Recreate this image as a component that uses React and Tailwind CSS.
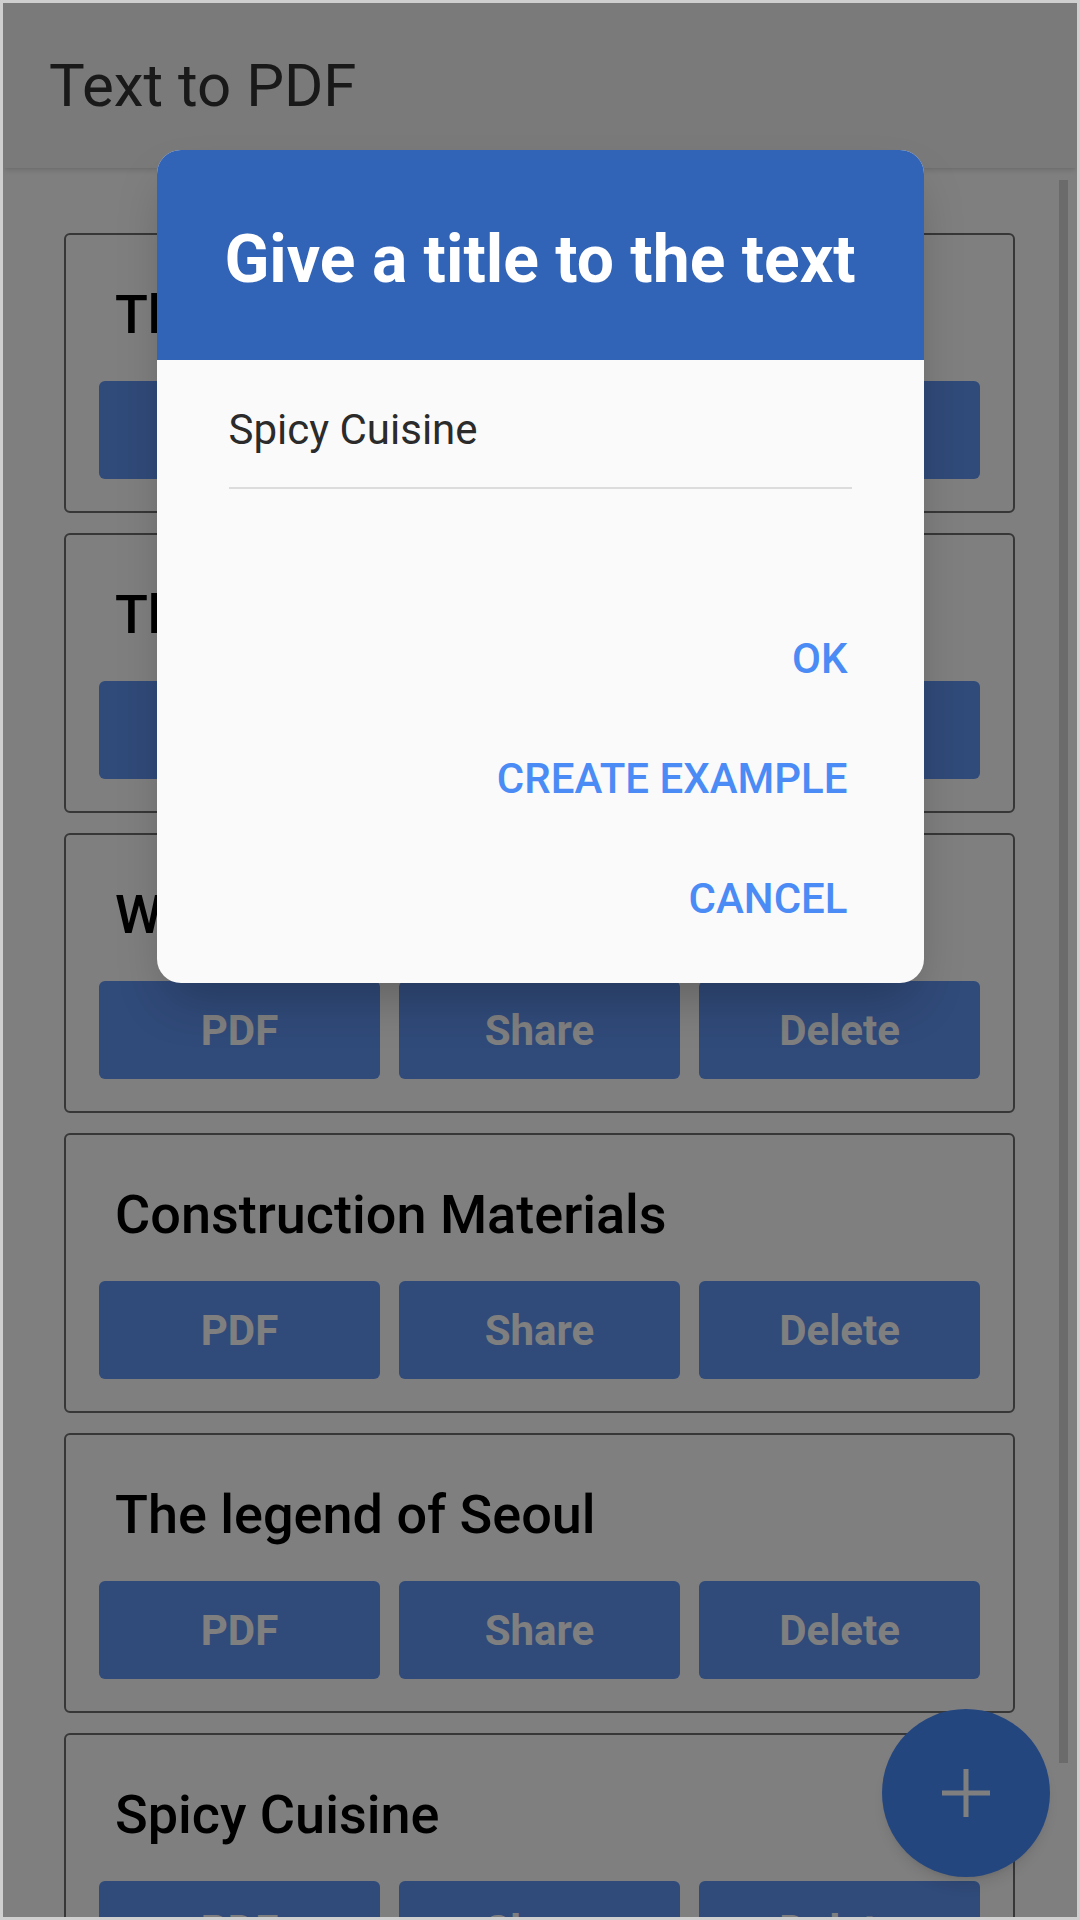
import React from 'react';

const notes = [
  'The little prince',
  'The history of tea',
  'Weekend shopping list',
  'Construction Materials',
  'The legend of Seoul',
  'Spicy Cuisine',
];

const NoteCard = ({ title }) => (
  <div className="rounded-[6px] border-2 border-[#6e6e6e] pt-[48px] px-[33px] pb-[32px]">
    <h2 className="text-[54px] leading-[64px] font-medium text-black pl-[16px] whitespace-nowrap">{title}</h2>
    <div className="mt-[34px] grid grid-cols-3 gap-[19px]">
      {['PDF', 'Share', 'Delete'].map((label) => (
        <button key={label} className="h-[98px] rounded-[6px] bg-[#6094f2] text-white text-[42px] font-bold">
          {label}
        </button>
      ))}
    </div>
  </div>
);

const TitleDialog = () => (
  <div className="w-[767px] rounded-[24px] bg-[#fafafa] shadow-2xl">
    <div className="h-[210px] rounded-t-[24px] bg-[#3163b7] flex items-center justify-center pt-[8px]">
      <h1 className="text-[66px] font-bold text-white">Give a title to the text</h1>
    </div>
    <div className="px-[72px] pb-[25px]">
      <div className="pt-[44px] pb-[31px] border-b-2 border-[#dcdcdc]">
        <p className="text-[42px] leading-[52px] text-[#2b2b2b]">Spicy Cuisine</p>
      </div>
      <div className="mt-[109px] flex flex-col items-end pr-[4px]">
        {['OK', 'CREATE EXAMPLE', 'CANCEL'].map((label) => (
          <button key={label} className="h-[120px] text-[42px] font-medium text-[#4b8bf5]">
            {label}
          </button>
        ))}
      </div>
    </div>
  </div>
);

export default function App() {
  return (
    <div className="w-[1080px] h-[1920px] border-[3px] border-[#cfcfcf] relative overflow-hidden bg-white font-['Roboto',sans-serif]">
      {/* app bar */}
      <header className="h-[165px] bg-[#f5f5f5] shadow-md flex items-center pl-[46px] relative z-[1]">
        <span className="text-[60px] text-[#333333]">Text to PDF</span>
      </header>

      {/* list */}
      <div className="relative">
        <div className="pt-[65px] pl-[61px] pr-[62px] flex flex-col gap-[20px]">
          {notes.map((t) => (
            <NoteCard key={t} title={t} />
          ))}
        </div>
        {/* scrollbar thumb */}
        <div className="absolute right-[9px] top-[12px] w-[9px] h-[1583px] bg-[#d6d6d6]" />
      </div>

      {/* floating add button */}
      <button className="absolute right-[27px] bottom-[40px] w-[168px] h-[168px] rounded-full bg-[#488cfe] shadow-lg flex items-center justify-center">
        <svg width="50" height="50" viewBox="0 0 50 50">
          <path d="M25 1v48M1 25h48" stroke="#ffffff" strokeWidth="5" />
        </svg>
      </button>

      {/* modal */}
      <div className="absolute inset-0 z-10 bg-black/50 flex justify-center items-start pt-[147px]">
        <TitleDialog />
      </div>
    </div>
  );
}
